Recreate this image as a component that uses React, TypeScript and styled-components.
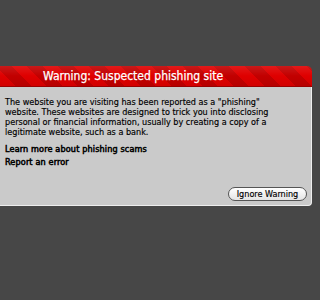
import React from "react";
import styled, { createGlobalStyle } from "styled-components";

const GlobalStyle = createGlobalStyle`
  html, body {
    margin: 0;
    padding: 0;
    background: #474747;
  }
  body {
    width: 320px;
    height: 300px;
    overflow: hidden;
  }
`;

const Page = styled.div`
  width: 320px;
  height: 300px;
  padding-top: 66px;
  box-sizing: border-box;
`;

const Sheet = styled.div`
  width: 312px;
  display: flex;
  flex-direction: column;
`;

const Header = styled.div`
  height: 20px;
  border-radius: 0 5px 0 0;
  background:
    linear-gradient(to bottom, rgba(255, 255, 255, 0.1), rgba(0, 0, 0, 0) 50%, rgba(0, 0, 0, 0.06)),
    repeating-linear-gradient(45deg, #df0000 0 11px, #c20000 11px 22px);
  border-bottom: 1px solid #9a0000;
  display: flex;
  align-items: center;
  padding-left: 43px;
`;

const Title = styled.h1`
  margin: 0;
  font-family: "DejaVu Sans Condensed", "DejaVu Sans", sans-serif;
  font-size: 12px;
  font-weight: normal;
  color: #ffffff;
  -webkit-text-stroke: 0.25px #ffffff;
`;

const Body = styled.div`
  background: #cacaca;
  border-right: 1px solid #eeeeee;
  border-bottom: 1px solid #eeeeee;
  border-radius: 0 0 4px 0;
  padding: 10px 4px 4px 5px;
  display: flex;
  flex-direction: column;
  font-family: "DejaVu Sans Condensed", "DejaVu Sans", sans-serif;
  font-size: 9px;
  color: #000000;
`;

const Message = styled.p`
  margin: 0 0 6px;
  max-width: 264px;
  line-height: 10px;
  -webkit-text-stroke: 0.15px #000000;
`;

const Link = styled.a`
  font-weight: normal;
  line-height: 13px;
  letter-spacing: 0.15px;
  color: #000000;
  text-decoration: none;
  -webkit-text-stroke: 0.5px #000000;
`;

const Actions = styled.div`
  display: flex;
  justify-content: flex-end;
  margin-top: 18px;
`;

const Button = styled.button`
  height: 14px;
  width: 79px;
  padding: 0;
  border: 1px solid #555555;
  border-radius: 8px;
  background: linear-gradient(to bottom, #ffffff, #f2f2f2 50%, #e4e4e4);
  font-family: "DejaVu Sans Condensed", "DejaVu Sans", sans-serif;
  font-size: 9px;
  color: #000000;
  line-height: 12px;
  -webkit-text-stroke: 0.15px #000000;
`;

export default function App() {
  return (
    <Page>
      <GlobalStyle />
      <Sheet>
        <Header>
          <Title>Warning: Suspected phishing site</Title>
        </Header>
        <Body>
          <Message>
            The website you are visiting has been reported as a "phishing"
            website. These websites are designed to trick you into disclosing
            personal or financial information, usually by creating a copy of a
            legitimate website, such as a bank.
          </Message>
          <Link href="#">Learn more about phishing scams</Link>
          <Link href="#">Report an error</Link>
          <Actions>
            <Button>Ignore Warning</Button>
          </Actions>
        </Body>
      </Sheet>
    </Page>
  );
}
